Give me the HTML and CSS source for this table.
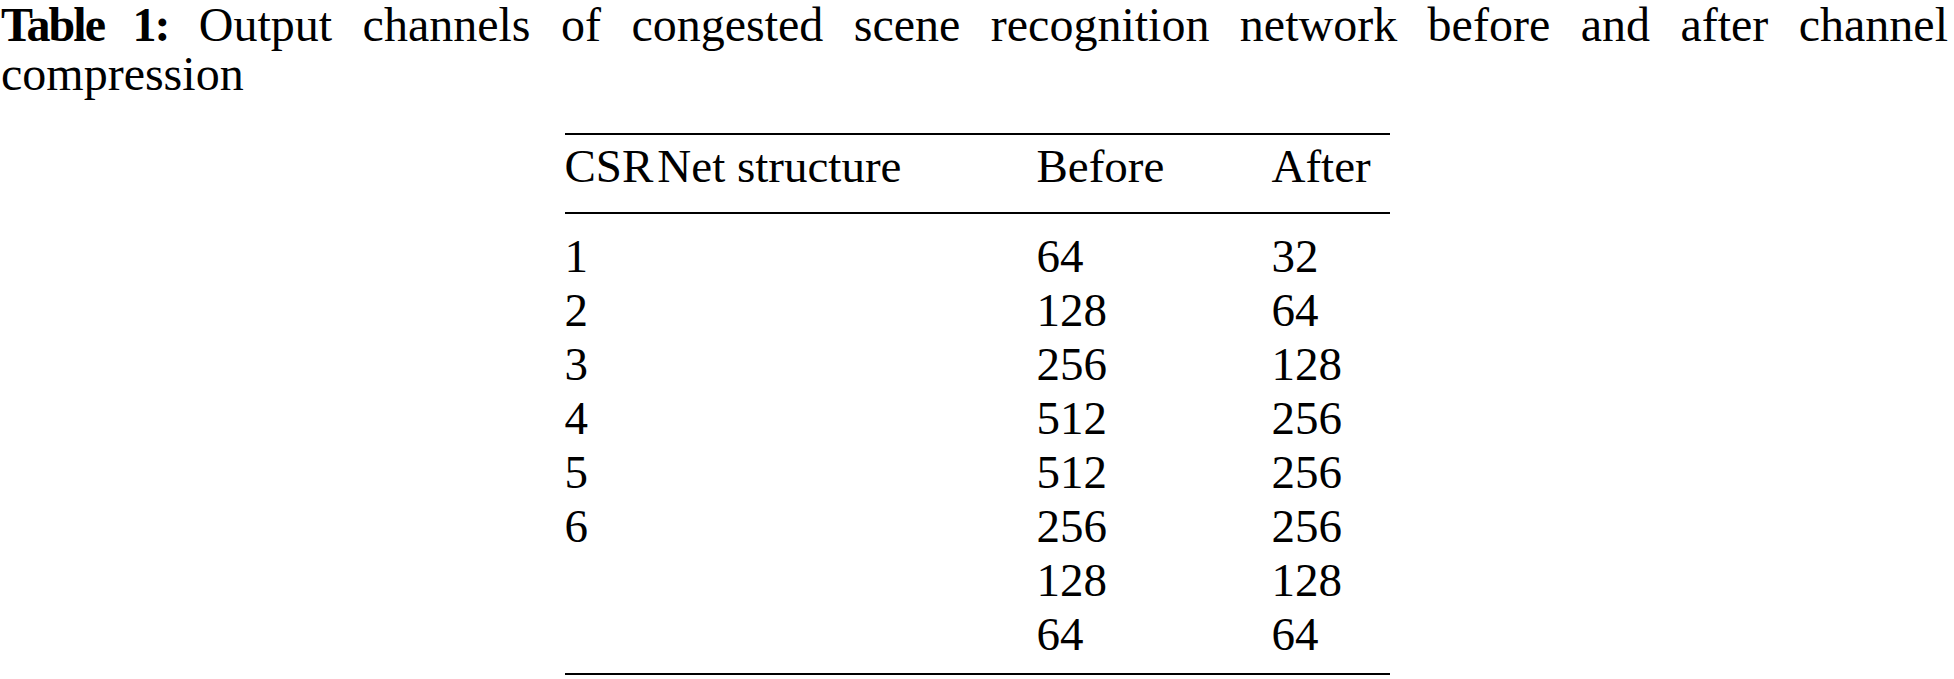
FILE: index.html
```html
<!DOCTYPE html>
<html lang="en">
<head>
<meta charset="utf-8">
<title>Table 1</title>
<link rel="stylesheet" href="styles.css">
</head>
<body>
<div class="page">
  <p class="caption"><strong class="label">Table 1:</strong> Output channels of congested scene recognition network before and after channel<br>compression</p>
  <table class="data">
    <colgroup>
      <col class="c1">
      <col class="c2">
      <col class="c3">
    </colgroup>
    <thead>
      <tr><th>CSR<span class="kern">N</span>et structure</th><th>Before</th><th>After</th></tr>
    </thead>
    <tbody>
      <tr><td>1</td><td>64</td><td>32</td></tr>
      <tr><td>2</td><td>128</td><td>64</td></tr>
      <tr><td>3</td><td>256</td><td>128</td></tr>
      <tr><td>4</td><td>512</td><td>256</td></tr>
      <tr><td>5</td><td>512</td><td>256</td></tr>
      <tr><td>6</td><td>256</td><td>256</td></tr>
      <tr><td></td><td>128</td><td>128</td></tr>
      <tr><td></td><td>64</td><td>64</td></tr>
    </tbody>
  </table>
</div>
</body>
</html>
```

FILE: styles.css
```css
html, body {
  margin: 0;
  padding: 0;
  background: #ffffff;
}

body {
  font-family: "Liberation Serif", "Times New Roman", serif;
  color: #000000;
}

.page {
  width: 1954px;
}

.caption {
  margin: 0;
  padding: 0 6px 0 1px;
  font-size: 48px;
  line-height: 49px;
  text-align: justify;
  text-align-last: justify;
}

.label {
  font-weight: bold;
  letter-spacing: -2px;
}

.data {
  border-collapse: collapse;
  width: 825px;
  margin: 35px auto 0;
  font-size: 47px;
  line-height: 54px;
  border-top: 2px solid #000000;
  border-bottom: 2px solid #000000;
}

.c1 { width: 472px; }
.c2 { width: 235px; }
.c3 { width: 118px; }

.data th,
.data td {
  padding: 0;
  text-align: left;
  font-weight: normal;
  white-space: nowrap;
}

.data thead th {
  padding-top: 4px;
  padding-bottom: 19px;
  border-bottom: 2px solid #000000;
}

.data tbody tr:first-child td {
  padding-top: 15px;
}

.data tbody tr:last-child td {
  padding-bottom: 12px;
}

.kern {
  margin-left: 4px;
}
```
